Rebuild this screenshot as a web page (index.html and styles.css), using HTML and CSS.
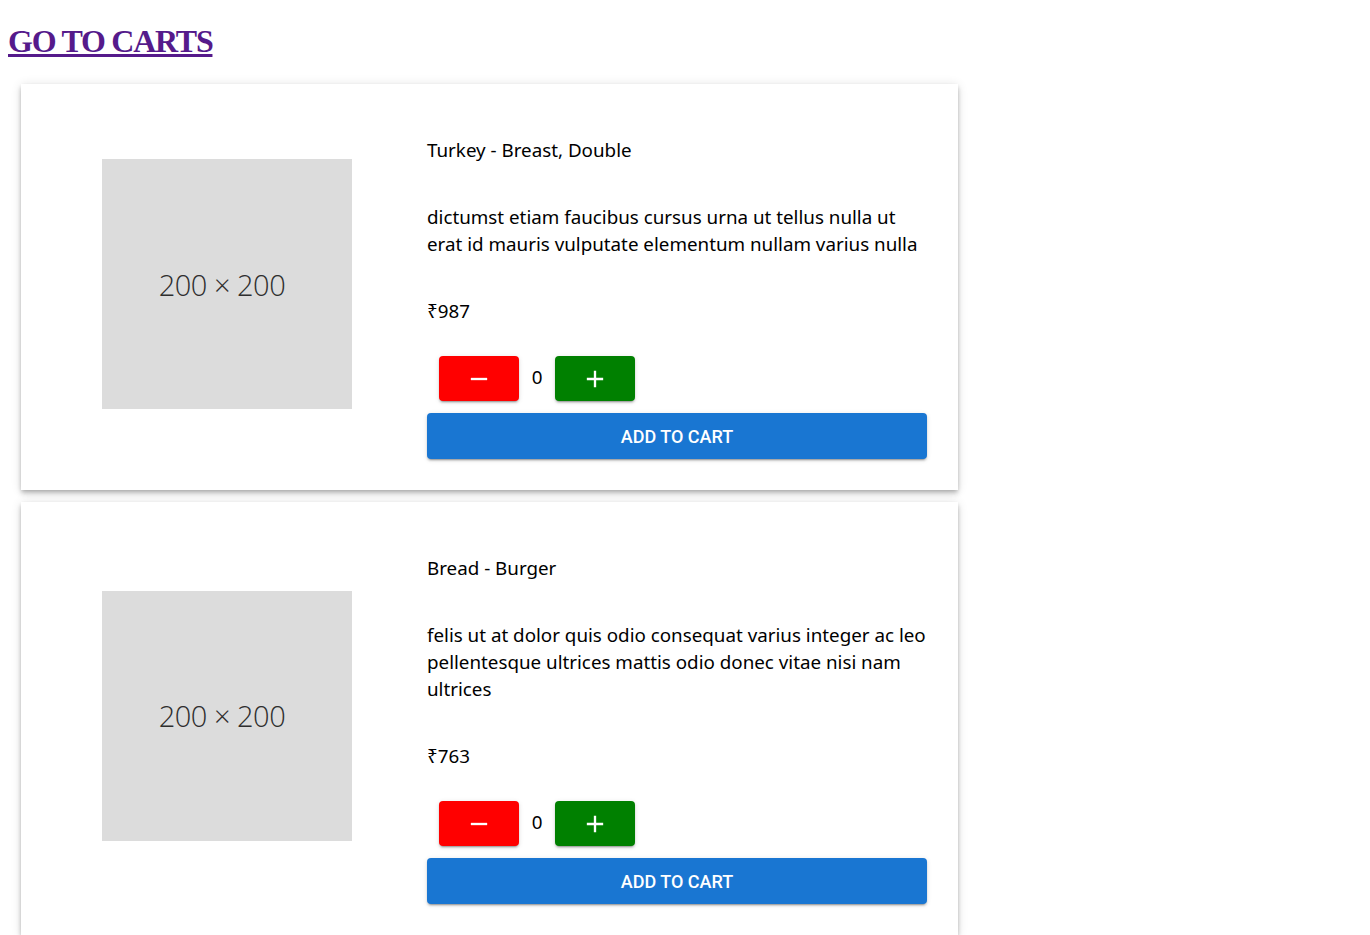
FILE: index.html
```html
<!DOCTYPE html>
<html>
<head>
<meta charset="utf-8">
<link rel="stylesheet" href="styles.css">
</head>
<body>
<h1 class="top-link"><a href="#">GO TO CARTS</a></h1>
<div class="list">
  <div class="card">
    <div class="media"><div class="ph"><span>200 × 200</span></div></div>
    <div class="info">
      <p class="title">Turkey - Breast, Double</p>
      <p class="desc">dictumst etiam faucibus cursus urna ut tellus nulla ut erat id mauris vulputate elementum nullam varius nulla</p>
      <p class="price">₹987</p>
      <div class="qty">
        <button class="btn minus"><svg viewBox="0 0 24 24" width="28" height="28"><path d="M19 13H5v-2h14v2z" fill="#fff"/></svg></button>
        <span class="count">0</span>
        <button class="btn plus"><svg viewBox="0 0 24 24" width="28" height="28"><path d="M19 13h-6v6h-2v-6H5v-2h6V5h2v6h6v2z" fill="#fff"/></svg></button>
      </div>
      <button class="add">ADD TO CART</button>
    </div>
  </div>
  <div class="card">
    <div class="media"><div class="ph"><span>200 × 200</span></div></div>
    <div class="info">
      <p class="title">Bread - Burger</p>
      <p class="desc">felis ut at dolor quis odio consequat varius integer ac leo pellentesque ultrices mattis odio donec vitae nisi nam ultrices</p>
      <p class="price">₹763</p>
      <div class="qty">
        <button class="btn minus"><svg viewBox="0 0 24 24" width="28" height="28"><path d="M19 13H5v-2h14v2z" fill="#fff"/></svg></button>
        <span class="count">0</span>
        <button class="btn plus"><svg viewBox="0 0 24 24" width="28" height="28"><path d="M19 13h-6v6h-2v-6H5v-2h6V5h2v6h6v2z" fill="#fff"/></svg></button>
      </div>
      <button class="add">ADD TO CART</button>
    </div>
  </div>
</div>
</body>
</html>
```
FILE: styles.css
```css
body {
  margin: 0 8px 8px;
  font-family: "Liberation Serif", "Times New Roman", serif;
}
.top-link {
  font-family: "Liberation Serif", "Times New Roman", serif;
  font-size: 32px;
  line-height: 37px;
  letter-spacing: -1.25px;
  margin: 23px 0 20px;
}
.top-link a { color: #551a8b; }
.list {
  padding: 4px 13px 0;
  display: flex;
  flex-direction: column;
  gap: 12px;
}
.card {
  width: 937px;
  background: #fff;
  box-shadow: 0 2px 4px -1px rgba(0,0,0,0.2), 0 4px 5px 0 rgba(0,0,0,0.14), 0 1px 10px 0 rgba(0,0,0,0.12);
  display: flex;
  align-items: center;
  font-family: "Noto Sans", "Open Sans", sans-serif;
  color: #000;
}
.media {
  width: 406px;
  flex: none;
  display: flex;
  justify-content: center;
  padding-left: 6px;
  margin-bottom: 6px;
  box-sizing: border-box;
}
.ph {
  width: 250px;
  height: 250px;
  background: #dcdcdc;
  display: flex;
  align-items: center;
  justify-content: center;
}
.ph span {
  font-family: "Open Sans", sans-serif;
  font-size: 29px;
  color: #2e2e2e;
  font-weight: 300;
  margin-right: 10px;
  letter-spacing: -0.5px;
}
.info {
  width: 500px;
  padding: 53px 0 31px;
}
.info p {
  margin: 0 0 40px;
  font-size: 18.8px;
  line-height: 27px;
}
.qty {
  display: flex;
  align-items: center;
  gap: 10px;
  padding-left: 12px;
  margin-top: -9px;
}
.btn {
  width: 80px;
  height: 45px;
  border: none;
  border-radius: 4px;
  display: flex;
  align-items: center;
  justify-content: center;
  box-shadow: 0 3px 1px -2px rgba(0,0,0,0.2), 0 2px 2px 0 rgba(0,0,0,0.14), 0 1px 5px 0 rgba(0,0,0,0.12);
}
.minus { background: #ff0000; }
.plus { background: #008000; }
.count {
  font-family: "Noto Sans", sans-serif;
  font-size: 18.8px;
  width: 16px;
  text-align: center;
  margin-top: -3px;
}
.add {
  display: block;
  margin-top: 12px;
  width: 500px;
  height: 46px;
  border: none;
  border-radius: 4px;
  background: #1976d2;
  color: #fff;
  font-family: Roboto, sans-serif;
  font-weight: 500;
  font-size: 18px;
  box-shadow: 0 3px 1px -2px rgba(0,0,0,0.2), 0 2px 2px 0 rgba(0,0,0,0.14), 0 1px 5px 0 rgba(0,0,0,0.12);
}
```
